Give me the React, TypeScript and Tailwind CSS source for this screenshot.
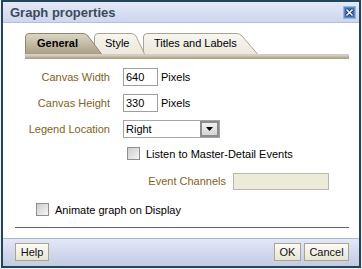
import React from "react";

// Graph properties dialog — ADF style tabs + form + footer buttons

type TabProps = {
  label: string;
  width: number;
  slope: number;
  selected?: boolean;
  className: string;
};

function Tab({ label, width, slope, selected, className }: TabProps) {
  const id = selected ? "tabSel" : "tabOff";
  const d = `M0.5 21 L0.5 4 Q0.5 0.5 4 0.5 L${width - slope - 3} 0.5 Q${width - slope} 0.5 ${width - slope + 2} 3 L${width - 0.5} 21`;
  return (
    <div className={`relative h-[21px] shrink-0 ${className}`}>
      <svg className="absolute inset-0" width={width} height={21} viewBox={`0 0 ${width} 21`}>
        <defs>
          <linearGradient id="tabSel" x1="0" y1="0" x2="0" y2="1">
            <stop offset="0" stopColor="#dcd6c4" />
            <stop offset="1" stopColor="#aaa084" />
          </linearGradient>
          <linearGradient id="tabOff" x1="0" y1="0" x2="0" y2="1">
            <stop offset="0" stopColor="#f7f6f0" />
            <stop offset="1" stopColor="#ebe8dc" />
          </linearGradient>
        </defs>
        <path d={d} fill={`url(#${id})`} stroke={selected ? "#8e8670" : "#aaa592"} strokeWidth="1" />
      </svg>
      <span
        className={`relative block pl-[11px] pt-[4px] text-[11px] leading-[13px] text-black ${
          selected ? "font-bold pl-[12px]" : ""
        }`}
      >
        {label}
      </span>
    </div>
  );
}

function Checkbox() {
  return (
    <div className="w-[13px] h-[13px] shrink-0 border border-[#8f8f8f] bg-gradient-to-br from-[#cdcdcd] to-[#f6f6f6]" />
  );
}

function Button({ label, className }: { label: string; className: string }) {
  return (
    <button
      className={`h-[18px] border border-[#aaa68e] bg-gradient-to-b from-[#fcfbf6] to-[#e8e5d5] text-[11px] leading-[16px] text-[#111] ${className}`}
    >
      {label}
    </button>
  );
}

export default function App() {
  return (
    <div className="w-[362px] h-[269px] bg-[#eef0f4] font-['Liberation_Sans',Arial,sans-serif]">
      <div className="ml-[1px] w-[360px] h-[268px] border-2 border-[#24445a] bg-white flex flex-col">

        {/* ── TITLE BAR ───────────────────────────── */}
        <div className="h-[21px] shrink-0 flex items-center justify-between pl-[7px] pr-[3px] border-b border-[#b4c0dc] bg-gradient-to-b from-[#e4e9f7] to-[#cdd6ee]">
          <span className="text-[13px] font-bold text-[#3b4a5c] leading-[15px]">Graph properties</span>
          <svg width="13" height="13" viewBox="0 0 13 13">
            <rect x="0.5" y="0.5" width="12" height="12" fill="#3f6fae" stroke="#9cb6da" />
            <rect x="1.5" y="1.5" width="10" height="10" fill="none" stroke="#5d8bc6" />
            <path d="M3.5 3.5 L9.5 9.5 M9.5 3.5 L3.5 9.5" stroke="#10254a" strokeWidth="3" />
            <path d="M3.5 3.5 L9.5 9.5 M9.5 3.5 L3.5 9.5" stroke="#ffffff" strokeWidth="1.6" />
          </svg>
        </div>

        {/* ── TABS ────────────────────────────────── */}
        <div className="mt-[10px] ml-[22px] flex">
          <Tab label="General" width={77} slope={16} selected className="w-[77px] z-30" />
          <Tab label="Style" width={51} slope={11} className="w-[51px] ml-[-8px] z-20" />
          <Tab label="Titles and Labels" width={115} slope={18} className="w-[115px] ml-[-2px] z-10" />
        </div>
        <div className="ml-[22px] w-[324px] h-[5px] shrink-0 border-t border-[#dcc8c6] bg-gradient-to-b from-[#d8d4c8] to-[#a39878]" />

        {/* ── FORM ────────────────────────────────── */}
        <div className="mt-[9px] flex items-center h-[18px]">
          <span className="w-[107px] text-right text-[11px] text-[#83611c]">Canvas Width</span>
          <input
            readOnly
            value="640"
            className="ml-[13px] w-[35px] h-[18px] border border-[#9e9e9e] px-[2px] text-[11px] text-black outline-none"
          />
          <span className="ml-[3px] text-[11px] text-black">Pixels</span>
        </div>

        <div className="mt-[8px] flex items-center h-[18px]">
          <span className="w-[107px] text-right text-[11px] text-[#83611c]">Canvas Height</span>
          <input
            readOnly
            value="330"
            className="ml-[13px] w-[35px] h-[18px] border border-[#9e9e9e] px-[2px] text-[11px] text-black outline-none"
          />
          <span className="ml-[3px] text-[11px] text-black">Pixels</span>
        </div>

        <div className="mt-[8px] flex items-center h-[18px]">
          <span className="w-[107px] text-right text-[11px] text-[#83611c]">Legend Location</span>
          <div className="ml-[13px] w-[97px] h-[18px] flex border border-[#a4a4a4]">
            <span className="flex-1 pl-[2px] text-[11px] leading-[16px] text-black">Right</span>
            <div className="w-[19px] h-[16px] border-2 border-[#8c8c8c] bg-gradient-to-b from-[#f0f0f0] to-[#d6d6d6] flex items-center justify-center">
              <svg width="7" height="4" viewBox="0 0 7 4">
                <path d="M0 0 L7 0 L3.5 4 Z" fill="#000" />
              </svg>
            </div>
          </div>
        </div>

        <div className="mt-[9px] ml-[124px] flex items-center h-[13px]">
          <Checkbox />
          <span className="ml-[6px] text-[11px] text-black leading-[13px] pt-[2px]">Listen to Master-Detail Events</span>
        </div>

        <div className="mt-[13px] flex items-center h-[17px]">
          <span className="w-[223px] text-right text-[11px] text-[#83611c]">Event Channels</span>
          <div className="ml-[7px] w-[96px] h-[17px] border border-[#b9b8ae] bg-[#ecead9]" />
        </div>

        <div className="mt-[13px] ml-[33px] flex items-center h-[13px]">
          <Checkbox />
          <span className="ml-[6px] text-[11px] text-black leading-[13px] pt-[1px]">Animate graph on Display</span>
        </div>

        <div className="mt-[11px] ml-[12px] mr-[10px] h-px bg-[#666666]" />

        {/* ── FOOTER ──────────────────────────────── */}
        <div className="mt-auto h-[28px] shrink-0 border-t border-[#aab6d6] bg-gradient-to-b from-[#e2e8f7] to-[#c3cbe4] flex items-start justify-between pl-[12px] pr-[10px] pt-[4px]">
          <Button label="Help" className="w-[34px]" />
          <div className="flex gap-[3px]">
            <Button label="OK" className="w-[27px]" />
            <Button label="Cancel" className="w-[45px]" />
          </div>
        </div>
      </div>
    </div>
  );
}
